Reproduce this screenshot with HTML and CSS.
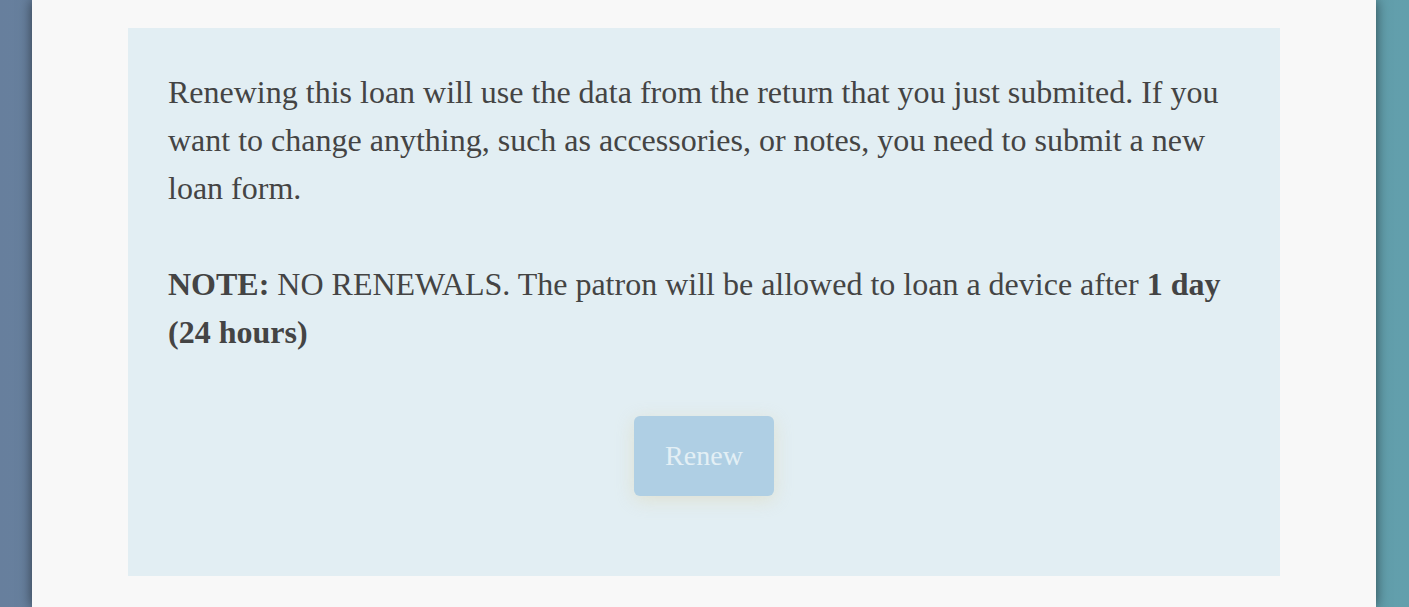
FILE: index.html
```html
<!DOCTYPE html>
<html>
<head>
<meta charset="utf-8">
<link rel="stylesheet" href="styles.css">
</head>
<body>
<div class="backdrop">
  <div class="modal">
    <div class="notice">
      <p>Renewing this loan will use the data from the return that you just submited. If you want to change anything, such as accessories, or notes, you need to submit a new loan form.</p>
      <p><strong>NOTE:</strong> NO RENEWALS. The patron will be allowed to loan a device after <strong>1 day (24 hours)</strong></p>
      <div class="actions">
        <button class="renew-btn" disabled>Renew</button>
      </div>
    </div>
  </div>
</div>
</body>
</html>
```
FILE: styles.css
```css
html, body {
  margin: 0;
  padding: 0;
  height: 100%;
  overflow: hidden;
}
body {
  font-family: "Liberation Serif", "Times New Roman", serif;
  background: linear-gradient(to right, #677f9d 0%, #6590a5 50%, #629fac 100%);
}
.backdrop {
  height: 100%;
  padding: 0 33px 0 32px;
}
.modal {
  background: #f8f8f8;
  height: 100%;
  padding: 28px 96px 0;
  box-shadow: 0 0 12px rgba(0, 0, 0, 0.55);
  box-sizing: border-box;
}
.notice {
  background: #e2eef3;
  padding: 40px 40px 80px;
  color: #444;
  font-size: 32px;
  line-height: 48px;
}
.notice p {
  margin: 0 0 48px;
}
.notice p + p {
  margin-bottom: 0;
}
.actions {
  display: flex;
  justify-content: center;
  margin-top: 60px;
}
.renew-btn {
  width: 140px;
  height: 80px;
  border: none;
  border-radius: 6px;
  background: #afcfe4;
  color: #e3eff5;
  font-family: "Liberation Serif", "Times New Roman", serif;
  font-size: 28px;
  box-shadow: 0 4px 18px rgba(220, 210, 170, 0.45);
  padding: 0;
}
```
